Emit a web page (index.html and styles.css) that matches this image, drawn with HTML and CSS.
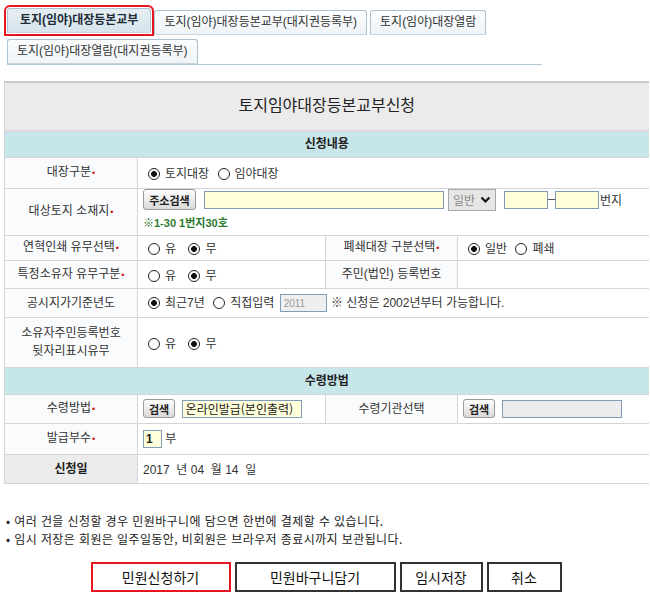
FILE: index.html
```html
<!DOCTYPE html>
<html lang="ko">
<head>
    <meta charset="UTF-8">
    <title>토지임야대장등본교부신청</title>
    <link rel="stylesheet" href="styles.css">
</head>
<body>
    <div class="page">
        <ul class="tabs">
            <li class="tab active">토지(임야)대장등본교부</li>
            <li class="tab">토지(임야)대장등본교부(대지권등록부)</li>
            <li class="tab">토지(임야)대장열람</li>
            <li class="tab">토지(임야)대장열람(대지권등록부)</li>
        </ul>

        <table class="form-table">
            <colgroup>
                <col class="col-label">
                <col class="col-value">
                <col class="col-label2">
                <col class="col-value2">
            </colgroup>
            <tr class="title-row">
                <th colspan="4">토지임야대장등본교부신청</th>
            </tr>
            <tr class="section-row">
                <th colspan="4">신청내용</th>
            </tr>
            <tr class="row-31">
                <th>대장구분<span class="req">•</span></th>
                <td colspan="3">
                    <input type="radio" class="radio" name="kind" checked>토지대장
                    <input type="radio" class="radio" name="kind">임야대장
                </td>
            </tr>
            <tr class="row-47">
                <th>대상토지 소재지<span class="req">•</span></th>
                <td colspan="3" class="addr-cell">
                    <div class="addr-line">
                        <button class="btn-small addr-btn">주소검색</button>
                        <input type="text" class="text-input addr-input">
                        <span class="select-box">일반
                            <svg width="11" height="8" viewBox="0 0 11 8"><polyline points="1.5,1.5 5.5,5.5 9.5,1.5" fill="none" stroke="#111" stroke-width="2.2"/></svg>
                        </span>
                        <input type="text" class="text-input num-input">
                        <span class="dash"></span>
                        <input type="text" class="text-input num-input">
                        <span class="unit">번지</span>
                    </div>
                    <div class="addr-hint">※1-30 1번지30호</div>
                </td>
            </tr>
            <tr class="row-25">
                <th>연혁인쇄 유무선택<span class="req">•</span></th>
                <td>
                    <input type="radio" class="radio" name="hist">유
                    <input type="radio" class="radio gap" name="hist" checked>무
                </td>
                <th class="label2">폐쇄대장 구분선택<span class="req">•</span></th>
                <td>
                    <input type="radio" class="radio" name="closed" checked>일반
                    <input type="radio" class="radio" name="closed">폐쇄
                </td>
            </tr>
            <tr class="row-28">
                <th>특정소유자 유무구분<span class="req">•</span></th>
                <td>
                    <input type="radio" class="radio" name="owner">유
                    <input type="radio" class="radio gap" name="owner" checked>무
                </td>
                <th class="label2">주민(법인) 등록번호</th>
                <td></td>
            </tr>
            <tr class="row-29">
                <th>공시지가기준년도</th>
                <td colspan="3">
                    <input type="radio" class="radio" name="year" checked>최근7년
                    <input type="radio" class="radio" name="year">직접입력
                    <input type="text" class="text-input year-input" value="2011" disabled>
                    <span class="year-note">※ 신청은 2002년부터 가능합니다.</span>
                </td>
            </tr>
            <tr class="row-50">
                <th>소유자주민등록번호<br>뒷자리표시유무</th>
                <td colspan="3">
                    <input type="radio" class="radio" name="mask">유
                    <input type="radio" class="radio gap" name="mask" checked>무
                </td>
            </tr>
            <tr class="section-row">
                <th colspan="4">수령방법</th>
            </tr>
            <tr class="row-29">
                <th>수령방법<span class="req">•</span></th>
                <td>
                    <button class="btn-small">검색</button>
                    <input type="text" class="text-input method-input" value="온라인발급(본인출력)">
                </td>
                <th class="label2">수령기관선택</th>
                <td>
                    <button class="btn-small">검색</button>
                    <input type="text" class="text-input office-input" disabled>
                </td>
            </tr>
            <tr class="row-31">
                <th>발급부수<span class="req">•</span></th>
                <td colspan="3">
                    <input type="text" class="text-input count-input" value="1"> 부
                </td>
            </tr>
            <tr class="row-29">
                <th class="date-label">신청일</th>
                <td colspan="3" class="date-cell">2017 &nbsp;년 04 &nbsp;월 14 &nbsp;일</td>
            </tr>
        </table>

        <ul class="notes">
            <li>여러 건을 신청할 경우 민원바구니에 담으면 한번에 결제할 수 있습니다.</li>
            <li>임시 저장은 회원은 일주일동안, 비회원은 브라우저 종료시까지 보관됩니다.</li>
        </ul>

        <div class="actions">
            <button class="btn btn-apply">민원신청하기</button>
            <button class="btn btn-cart">민원바구니담기</button>
            <button class="btn btn-save">임시저장</button>
            <button class="btn btn-cancel">취소</button>
        </div>
    </div>
</body>
</html>
```

FILE: styles.css
```css
* {
    box-sizing: border-box;
}

body {
    margin: 0;
    background: #fff;
    color: #333;
    font-family: 'Liberation Sans', 'Noto Sans CJK KR', sans-serif;
    font-size: 12px;
}

.page {
    padding: 0 2px 0 4px;
}

/* 탭 */
.tabs {
    display: flex;
    flex-wrap: wrap;
    align-items: flex-start;
    gap: 4px 3px;
    width: 535px;
    margin: 0 0 0 3px;
    padding: 10px 0 0;
    list-style: none;
    border-bottom: 1px solid #b3c9d5;
}

.tab {
    height: 25px;
    line-height: 23px;
    padding: 0 9px;
    border: 1px solid #a9c3d2;
    border-bottom-color: #c7d6de;
    border-radius: 3px 3px 0 0;
    background: linear-gradient(#fcfdfe, #eef3f6);
    color: #333;
    white-space: nowrap;
}

.tab.active {
    margin-top: -2px;
    padding: 0 12px;
    background: linear-gradient(#e6eef3, #d6e4ec);
    color: #1d2b38;
    font-weight: bold;
    outline: 2px solid #e5161d;
    outline-offset: 1px;
}

/* 신청 테이블 */
.form-table {
    width: 644px;
    margin-top: 16px;
    border-collapse: collapse;
    table-layout: fixed;
    border-top: 2px solid #c9c9c9;
    border-left: 1px solid #cfcfcf;
}

.col-label { width: 133px; }
.col-value { width: 188px; }
.col-label2 { width: 132px; }
.col-value2 { width: 191px; }

.form-table th,
.form-table td {
    border: 1px solid #d5d5d5;
    border-right: none;
    padding: 0 5px;
    font-size: 12px;
}

.form-table th {
    background: #fafbfc;
    font-weight: normal;
    color: #333;
    text-align: center;
    line-height: 18px;
    border-right: 1px solid #d5d5d5;
}

.form-table td {
    color: #333;
    white-space: nowrap;
}

.form-table .title-row th {
    height: 48px;
    background: #ebebeb;
    border-bottom: 1px solid #ebcfcf;
    font-size: 16px;
    color: #222;
    border-right: none;
}

.form-table .section-row th {
    height: 27px;
    background: #c6e6ea;
    font-weight: bold;
    color: #222;
    border-right: none;
}

.row-25 { height: 25px; }
.row-28 { height: 28px; }
.row-29 { height: 29px; }
.row-31 { height: 31px; }
.row-47 { height: 47px; }
.row-50 { height: 50px; }

.req {
    color: #d3141a;
    font-size: 9px;
    margin-left: 1px;
}

.form-table .date-label {
    background: #ececec;
    font-weight: bold;
    color: #222;
}

.date-cell {
    font-size: 11px;
}

/* 라디오 */
.radio {
    appearance: none;
    width: 12px;
    height: 12px;
    margin: 0 5px 0 5px;
    border: 1.5px solid #222;
    border-radius: 50%;
    background: #fff;
    vertical-align: -2px;
}

.radio:checked {
    background: radial-gradient(circle, #111 0 2.6px, #fff 3.2px);
}

.radio.gap {
    margin-left: 9px;
}

/* 입력 */
.text-input {
    height: 18px;
    padding: 0 3px;
    border: 1px solid #7f9db9;
    background: #ffffdc;
    font-family: 'Liberation Sans', 'Noto Sans CJK KR', sans-serif;
    font-size: 12px;
    color: #222;
    vertical-align: middle;
}

.btn-small {
    height: 19px;
    padding: 0 5px;
    border: 1px solid #9a9a9a;
    border-radius: 3px;
    background: linear-gradient(#fefefe, #dadada);
    font-family: 'Noto Sans CJK KR', sans-serif;
    font-size: 11px;
    font-weight: bold;
    color: #222;
    vertical-align: middle;
}

.addr-cell {
    vertical-align: top;
    padding-top: 6px;
}

.addr-line {
    display: flex;
    align-items: center;
}

.addr-btn {
    width: 53px;
    height: 21px;
}

.addr-input {
    width: 240px;
    margin-left: 8px;
}

.select-box {
    display: inline-flex;
    align-items: center;
    gap: 5px;
    width: 48px;
    height: 22px;
    margin-left: 4px;
    padding: 0 4px;
    border: 1px solid #a8a8a8;
    background: #e6e6e6;
    color: #8a8a8a;
    font-family: 'Noto Sans CJK KR', sans-serif;
}

.num-input {
    width: 44px;
}

.select-box + .num-input {
    margin-left: 8px;
}

.dash {
    width: 7px;
    height: 1px;
    background: #555;
}

.unit {
    margin-left: 1px;
}

.addr-hint {
    margin-top: 3px;
    color: #2e7a2e;
    font-size: 11px;
    font-weight: bold;
}

.year-input {
    width: 47px;
    margin-left: 2px;
    background: #efefef;
    color: #9a9a9a;
    font-size: 10px;
}

.year-note {
    margin-left: 1px;
}

.method-input {
    width: 120px;
    margin-left: 3px;
    font-family: 'Noto Sans CJK KR', sans-serif;
}

.office-input {
    width: 120px;
    margin-left: 3px;
    background: #ececec;
}

.count-input {
    width: 19px;
    padding: 0 2px;
    font-weight: bold;
}

/* 안내 */
.notes {
    margin: 28px 0 0 2px;
    padding: 0;
    list-style: none;
    font-family: 'Noto Sans CJK KR', sans-serif;
    font-size: 12px;
    letter-spacing: 0.4px;
    line-height: 18px;
    color: #222;
}

.notes li::before {
    content: "• ";
}

/* 버튼 */
.actions {
    display: flex;
    justify-content: center;
    gap: 4px;
    margin-top: 14px;
}

.btn {
    height: 30px;
    border: 2px solid #333;
    background: #fff;
    font-family: 'Noto Sans CJK KR', sans-serif;
    font-size: 14px;
    color: #111;
}

.btn-apply {
    width: 140px;
    border-color: #e5161d;
}

.btn-cart { width: 161px; }
.btn-save { width: 83px; }
.btn-cancel { width: 75px; }
```
